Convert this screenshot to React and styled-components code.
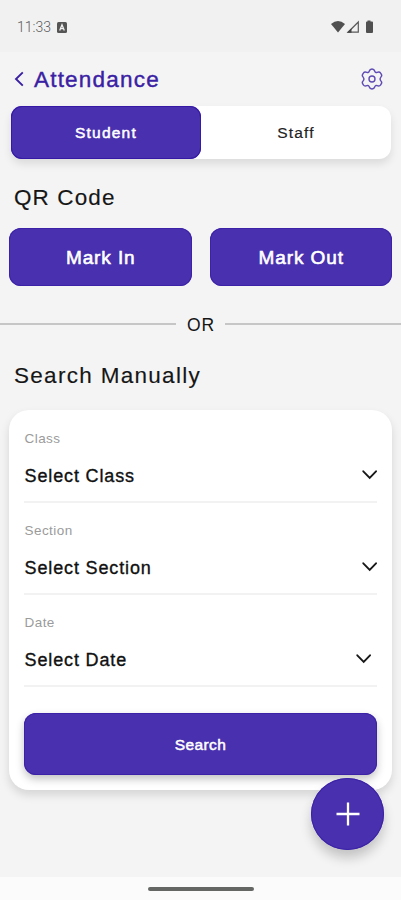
import React, { useState } from "react";
import styled, { createGlobalStyle } from "styled-components";

const GlobalStyle = createGlobalStyle`
  * {
    box-sizing: border-box;
  }
  body {
    margin: 0;
    background: #f4f4f4;
    font-family: "Liberation Sans", Arial, Helvetica, sans-serif;
    color: #161616;
  }
  button {
    font-family: inherit;
    border: none;
    padding: 0;
    cursor: pointer;
  }
`;

const Screen = styled.div`
  width: 401px;
  height: 900px;
  overflow: hidden;
  display: flex;
  flex-direction: column;
  background: #f4f4f4;
`;

const StatusBar = styled.div`
  height: 52px;
  flex-shrink: 0;
  display: flex;
  align-items: center;
  justify-content: space-between;
  padding: 2px 26px 0 17px;
  background: #f1f1f1;
  .time {
    display: flex;
    align-items: center;
    column-gap: 6px;
    font-family: Roboto, sans-serif;
    font-size: 14px;
    font-weight: 300;
    color: #5a5a5a;
  }
  svg {
    display: block;
  }
`;

const Header = styled.div`
  height: 54px;
  flex-shrink: 0;
  display: flex;
  align-items: center;
  padding: 0 18px 0 14px;
  color: #3a21a3;
  .title {
    flex: 1;
    margin-left: 9px;
    padding: 2px 0 0 1px;
    font-size: 22.5px;
    letter-spacing: 1.2px;
    -webkit-text-stroke: 0.4px #3a21a3;
  }
  button {
    display: flex;
    background: none;
    color: inherit;
  }
`;

const Tabs = styled.div`
  display: flex;
  flex-shrink: 0;
  height: 53px;
  margin: 0 10px 0 11px;
  border-radius: 12px;
  background: #ffffff;
  box-shadow: 0 5px 9px rgba(0, 0, 0, 0.1);
`;

const Tab = styled.button`
  width: 190px;
  padding-top: 1px;
  border-radius: 11px;
  font-size: 15.5px;
  letter-spacing: 1.2px;
  background: ${({ $active }) => ($active ? "#4830ae" : "transparent")};
  color: ${({ $active }) => ($active ? "#ffffff" : "#222222")};
  box-shadow: ${({ $active }) => ($active ? "inset 0 0 0 1px #3619a4" : "none")};
  -webkit-text-stroke: ${({ $active }) => ($active ? "0.5px" : "0.2px")};
`;

const SectionTitle = styled.div`
  flex-shrink: 0;
  height: 26px;
  line-height: 26px;
  margin: ${({ $top }) => $top}px 0 0 14px;
  font-size: 22.5px;
  letter-spacing: ${({ $spacing }) => $spacing}px;
  -webkit-text-stroke: 0.15px;
`;

const MarkRow = styled.div`
  display: grid;
  flex-shrink: 0;
  grid-template-columns: 1fr 1fr;
  column-gap: 18px;
  margin: 17px 9px 0;
`;

const MarkButton = styled.button`
  height: 58px;
  padding: 2px 0 0 1px;
  border-radius: 12px;
  background: #4830ae;
  box-shadow: inset 0 0 0 1px #3c22a7;
  color: #ffffff;
  font-size: 19px;
  letter-spacing: 0.9px;
  -webkit-text-stroke: 0.6px;
`;

const Divider = styled.div`
  display: flex;
  flex-shrink: 0;
  align-items: center;
  height: 20px;
  margin-top: 28px;
  column-gap: 10px;
  font-size: 17.5px;
  letter-spacing: 0.8px;
  span {
    padding: 2px 0 0 1px;
  }
  &::before,
  &::after {
    content: "";
    flex: 1;
    height: 2px;
    margin-bottom: 1px;
    background: #c6c6c6;
  }
`;

const Card = styled.div`
  flex-shrink: 0;
  height: 380px;
  margin: 21px 9px 0;
  padding: 20px 15px 0;
  border-radius: 20px;
  background: #ffffff;
  box-shadow: 0 5px 10px rgba(0, 0, 0, 0.13);
`;

const Field = styled.div`
  height: 92px;
  .label {
    height: 18px;
    line-height: 18px;
    padding-left: 0.5px;
    font-size: 13.5px;
    letter-spacing: 0.45px;
    color: #9b9b9b;
  }
  .value {
    display: flex;
    align-items: center;
    justify-content: space-between;
    height: 55px;
    padding: 1px ${({ $inset }) => $inset}px 0 0.5px;
    border-bottom: 2px solid #f2f2f2;
    font-size: 18px;
    letter-spacing: 0.87px;
    color: #111111;
    -webkit-text-stroke: 0.35px;
  }
  .text {
    padding-top: 2px;
  }
`;

const SearchButton = styled.button`
  display: block;
  width: 100%;
  height: 62px;
  margin-top: 7px;
  padding-top: 2px;
  border-radius: 12px;
  background: #4830ae;
  box-shadow: inset 0 0 0 1px #3c22a7, 0 4px 8px rgba(0, 0, 0, 0.24);
  color: #ffffff;
  font-size: 15.5px;
  letter-spacing: 0.4px;
  -webkit-text-stroke: 0.5px;
`;

const AddButton = styled.button`
  position: fixed;
  left: 311px;
  top: 778px;
  width: 73px;
  height: 72px;
  display: flex;
  align-items: center;
  justify-content: center;
  border-radius: 50%;
  background: #4830ae;
  box-shadow: inset 0 0 0 1px #3c22a7, 0 8px 12px rgba(0, 0, 0, 0.2);
`;

const NavBar = styled.div`
  flex-shrink: 0;
  display: flex;
  justify-content: center;
  height: 23px;
  margin-top: auto;
  padding-top: 10px;
  background: #fbfbfb;
  &::after {
    content: "";
    width: 106px;
    height: 4px;
    border-radius: 2px;
    background: #656765;
  }
`;

function Chevron() {
  return (
    <svg width="15" height="10" viewBox="0 0 15 10" fill="none">
      <path
        d="M1.3 1.3 7.7 7.8l6.3-6.5"
        stroke="#181818"
        strokeWidth="1.9"
        strokeLinecap="round"
      />
    </svg>
  );
}

function Gear() {
  return (
    <svg
      width="22"
      height="22"
      viewBox="0 0 22 22"
      fill="none"
      stroke="currentColor"
      strokeWidth="1.4"
      strokeOpacity="0.8"
    >
      <path d="M8.2 3.2Q8.8 1 11 1T13.800 3.200Q14.300 5 16.200 4.400 18.400 3.400 19.700 5.200 21.600 7.600 19.900 9.100 18.300 11 19.900 12.900 21.600 14.400 19.700 16.800 18.400 18.600 16.200 17.600 14.300 17 13.800 18.800 13.200 21 11 21T8.200 18.800Q7.700 17 5.800 17.600 3.600 18.600 2.300 16.800.400 14.400 2.100 12.900 3.700 11 2.100 9.100.400 7.600 2.300 5.200 3.600 3.400 5.800 4.400 7.700 5 8.200 3.200Z" />
      <circle cx="11" cy="11" r="3" />
    </svg>
  );
}

function App() {
  const [tab, setTab] = useState("Student");

  return (
    <Screen>
      <GlobalStyle />
      <StatusBar>
        <div className="time">
          <span>11:33</span>
          <svg width="10" height="11" viewBox="0 0 10 11">
            <rect width="10" height="11" rx="1.5" fill="#555555" />
            <path
              d="M2.7 8.4 5 2.8l2.3 5.6M3.6 6.6h2.8"
              fill="none"
              stroke="#f1f1f1"
              strokeWidth="1.3"
            />
          </svg>
        </div>
        <svg width="44" height="14" viewBox="0 0 44 14">
          <path d="M0 4Q7-2 14 4L7 12.5Z" fill="#505050" />
          <path
            d="M17 12.2h10.3V2Z"
            fill="none"
            stroke="#5a5a5a"
            strokeWidth="1.2"
          />
          <path d="M16 12.7l4.5-4.5v4.5Z" fill="#444444" />
          <path
            d="M36.5.5h3v1H41q1 0 1 1v9.5q0 1-1 1h-5q-1 0-1-1V2.5q0-1 1-1h.5Z"
            fill="#505050"
          />
        </svg>
      </StatusBar>

      <Header>
        <button aria-label="Back">
          <svg width="10" height="16" viewBox="0 0 10 16" fill="none">
            <path d="M8.8 1.4 2 8l6.8 6.6" stroke="currentColor" strokeWidth="1.9" />
          </svg>
        </button>
        <div className="title">Attendance</div>
        <button aria-label="Settings">
          <Gear />
        </button>
      </Header>

      <Tabs>
        {tabArr.map((name) => (
          <Tab key={name} $active={tab === name} onClick={() => setTab(name)}>
            {name}
          </Tab>
        ))}
      </Tabs>

      <SectionTitle $top={26} $spacing={1.1}>
        QR Code
      </SectionTitle>
      <MarkRow>
        <MarkButton>Mark In</MarkButton>
        <MarkButton>Mark Out</MarkButton>
      </MarkRow>

      <Divider>
        <span>OR</span>
      </Divider>

      <SectionTitle $top={29} $spacing={1.3}>
        Search Manually
      </SectionTitle>
      <Card>
        {fieldArr.map(({ label, value, inset }) => (
          <Field key={label} $inset={inset}>
            <div className="label">{label}</div>
            <div className="value">
              <div className="text">{value}</div>
              <Chevron />
            </div>
          </Field>
        ))}
        <SearchButton>Search</SearchButton>
      </Card>

      <AddButton aria-label="Add">
        <svg width="24" height="24" viewBox="0 0 24 24">
          <path d="M12 .5v23M.5 12h23" stroke="#ffffff" strokeWidth="2.3" />
        </svg>
      </AddButton>
      <NavBar />
    </Screen>
  );
}

export default App;

const tabArr = ["Student", "Staff"];

const fieldArr = [
  { label: "Class", value: "Select Class", inset: 0 },
  { label: "Section", value: "Select Section", inset: 0 },
  { label: "Date", value: "Select Date", inset: 6 },
];
